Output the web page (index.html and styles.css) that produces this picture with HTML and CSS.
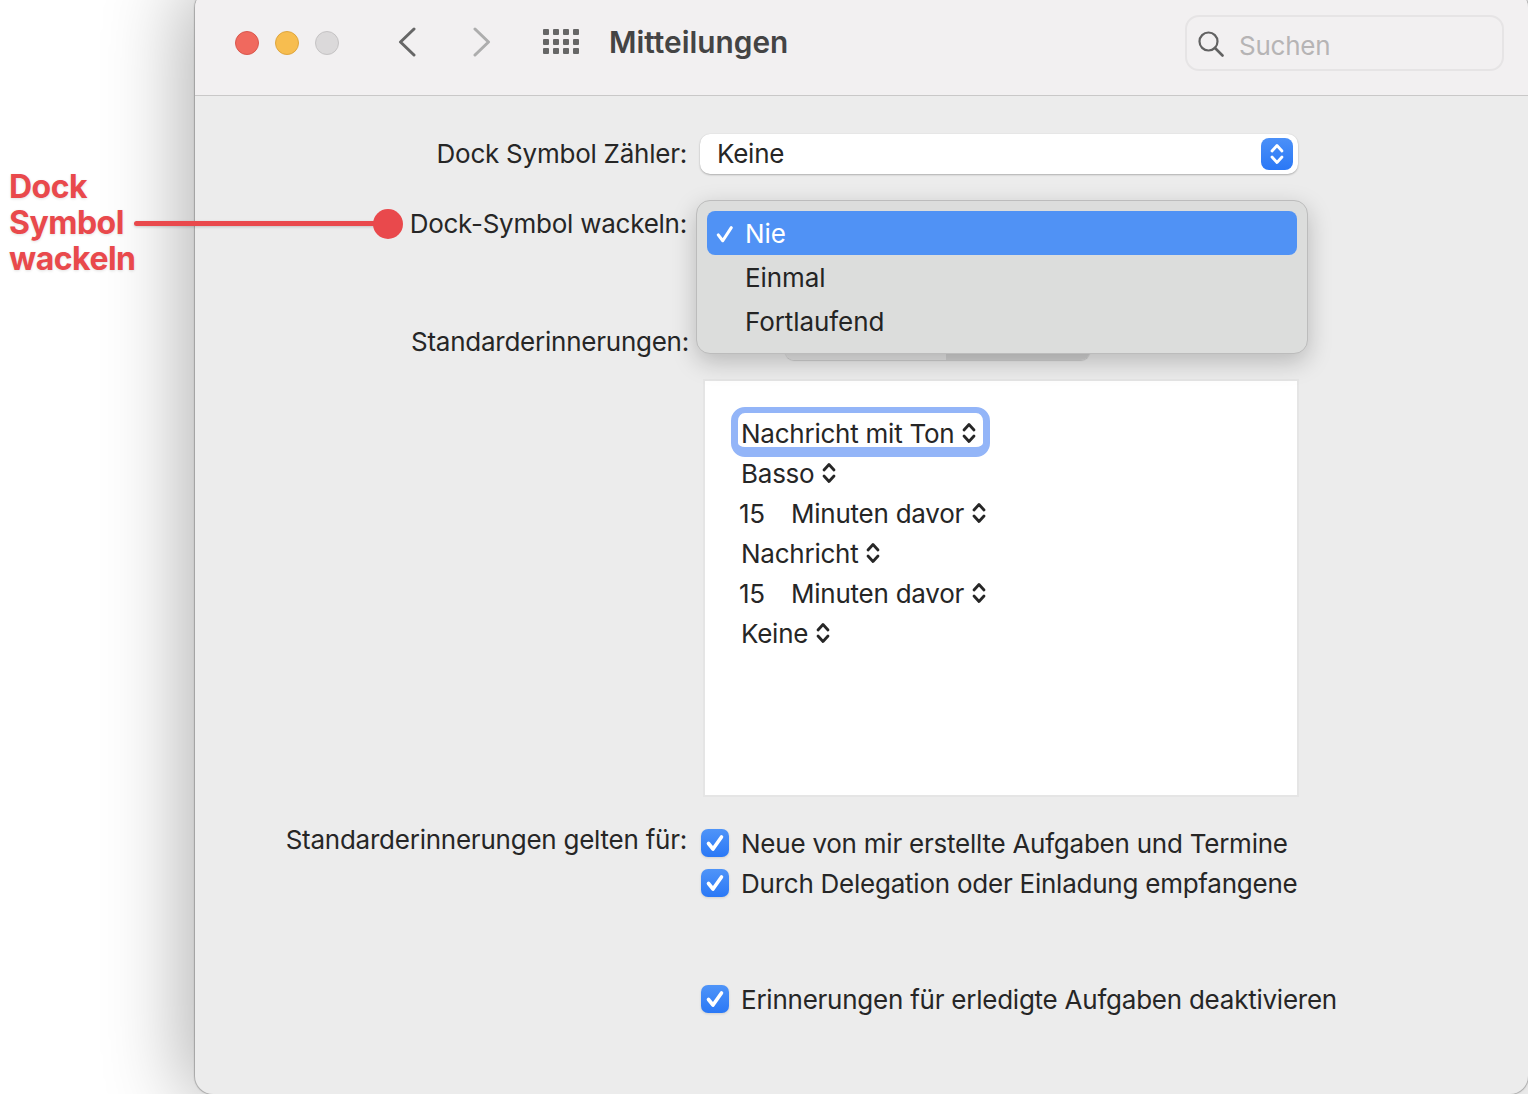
FILE: index.html
```html
<!DOCTYPE html>
<html lang="de">
<head>
<meta charset="utf-8">
<title>Mitteilungen</title>
<link rel="stylesheet" href="styles.css">
</head>
<body>
<svg class="defs" width="0" height="0" aria-hidden="true">
  <symbol id="updown" viewBox="0 0 14 26">
    <path d="M2 10 L7 4.500 L12 10 M2 16 L7 21.500 L12 16" fill="none" stroke="currentColor" stroke-width="2.800" stroke-linecap="round" stroke-linejoin="round"/>
  </symbol>
  <symbol id="tick" viewBox="0 0 28 28">
    <rect width="28" height="28" rx="7" fill="url(#checkfill)"/>
    <path d="M7.500 14.500 L12 20 L20.500 8" fill="none" stroke="#fff" stroke-width="3.600" stroke-linecap="round" stroke-linejoin="round"/>
  </symbol>
  <defs>
    <linearGradient id="checkfill" x1="0" y1="0" x2="0" y2="1">
      <stop offset="0" stop-color="#4f94f8"/>
      <stop offset="1" stop-color="#2a78f6"/>
    </linearGradient>
  </defs>
</svg>

<div class="window">
  <header class="titlebar">
    <div class="lights">
      <span class="light red"></span>
      <span class="light yellow"></span>
      <span class="light grey"></span>
    </div>
    <div class="nav">
      <svg class="chev" viewBox="0 0 18 30"><path d="M16 2 L2.500 15 L16 28" fill="none" stroke="#666" stroke-width="3" stroke-linecap="round" stroke-linejoin="round"/></svg>
      <svg class="chev" viewBox="0 0 18 30"><path d="M2 2 L15.500 15 L2 28" fill="none" stroke="#adadad" stroke-width="3" stroke-linecap="round" stroke-linejoin="round"/></svg>
    </div>
    <div class="gridicon">
      <i></i><i></i><i></i><i></i><i></i><i></i><i></i><i></i><i></i><i></i><i></i><i></i>
    </div>
    <h1 class="title">Mitteilungen</h1>
    <div class="search">
      <svg class="glass" viewBox="0 0 26 26"><circle cx="10.500" cy="10.500" r="9" fill="none" stroke="#626262" stroke-width="2.200"/><path d="M17 17 L24.500 24.500" stroke="#626262" stroke-width="2.600" stroke-linecap="round"/></svg>
      <span class="placeholder">Suchen</span>
    </div>
  </header>

  <main class="prefs">
    <div class="row first">
      <div class="label">Dock Symbol Zähler:</div>
      <div class="select">
        <span class="select-value">Keine</span>
        <span class="select-btn"><svg class="updown-btn"><use href="#updown"/></svg></span>
      </div>
    </div>

    <div class="row second">
      <div class="label">Dock-Symbol wackeln:</div>
    </div>

    <div class="row third">
      <div class="label nudge">Standarderinnerungen:</div>
      <div class="segments">
        <span class="seg"></span>
        <span class="seg active"></span>
      </div>
    </div>

    <div class="listbox">
      <div class="line"><span class="pick focus">Nachricht mit Ton <svg class="updown"><use href="#updown"/></svg></span></div>
      <div class="line"><span class="pick">Basso <svg class="updown"><use href="#updown"/></svg></span></div>
      <div class="line num"><span class="n">15</span><span class="pick">Minuten davor <svg class="updown"><use href="#updown"/></svg></span></div>
      <div class="line"><span class="pick">Nachricht <svg class="updown"><use href="#updown"/></svg></span></div>
      <div class="line num"><span class="n">15</span><span class="pick">Minuten davor <svg class="updown"><use href="#updown"/></svg></span></div>
      <div class="line"><span class="pick">Keine <svg class="updown"><use href="#updown"/></svg></span></div>
    </div>

    <div class="checks">
      <div class="row check-row">
        <div class="label raised">Standarderinnerungen gelten für:</div>
        <label class="check"><svg class="box"><use href="#tick"/></svg><span>Neue von mir erstellte Aufgaben und Termine</span></label>
      </div>
      <div class="row check-row">
        <div class="label"></div>
        <label class="check"><svg class="box"><use href="#tick"/></svg><span>Durch Delegation oder Einladung empfangene</span></label>
      </div>
      <div class="row check-row last">
        <div class="label"></div>
        <label class="check"><svg class="box"><use href="#tick"/></svg><span>Erinnerungen für erledigte Aufgaben deaktivieren</span></label>
      </div>
    </div>
  </main>

  <div class="menu">
    <div class="item on"><svg class="mark" viewBox="0 0 20 20"><path d="M2.500 11 L7.500 17.500 L17 3" fill="none" stroke="#fff" stroke-width="3.400" stroke-linecap="round" stroke-linejoin="round"/></svg>Nie</div>
    <div class="item">Einmal</div>
    <div class="item">Fortlaufend</div>
  </div>
</div>

<div class="callout">
  <div class="callout-text">Dock<br>Symbol<br>wackeln</div>
  <div class="callout-line"></div>
  <div class="callout-dot"></div>
</div>
</body>
</html>
```
FILE: styles.css
```css
* { box-sizing: border-box; }
html, body { margin: 0; padding: 0; height: 100%; background: #fff; overflow: hidden; }
body {
  font-family: Inter, "Liberation Sans", sans-serif;
  font-size: 26px;
  color: #262626;
  letter-spacing: -.24px;
}
.defs { position: absolute; }

.window {
  position: relative;
  margin: -10px 0 0 195px;
  width: 1333px;
  height: 1104px;
  background: #ececec;
  border-radius: 18px;
  box-shadow: 0 0 1px 1px rgba(120,120,120,.55), -6px 0 80px 6px rgba(0,0,0,.3);
}

.titlebar {
  display: flex;
  align-items: center;
  height: 106px;
  padding: 0 24px 0 40px;
  background: #f2f0f1;
  border-bottom: 1px solid #c9c8c8;
  border-radius: 18px 18px 0 0;
}
.lights { display: flex; gap: 16px; }
.light { width: 24px; height: 24px; border-radius: 50%; border: 1px solid; }
.red { background: #f0695e; border-color: #d9574d; }
.yellow { background: #f7bd4f; border-color: #dfa63e; }
.grey { background: #dbd9da; border-color: #c5c3c4; }

.nav { display: flex; gap: 57px; margin-left: 59px; margin-top: -2px; }
.chev { width: 18px; height: 30px; display: block; }

.gridicon {
  display: grid;
  grid-template-columns: repeat(4, 6px);
  grid-auto-rows: 6px;
  gap: 3.500px 4px;
  margin: -2px 0 0 52px;
}
.gridicon i { background: #666; border-radius: 1px; }

.title {
  margin: -2px 0 0 30px;
  font-size: 29.800px;
  font-weight: 600;
  color: #444;
  letter-spacing: 0;
}

.search {
  display: flex;
  align-items: center;
  width: 319px;
  height: 56px;
  margin: 0 0 0 auto;
  padding-left: 11px;
  border: 2px solid #e6e4e5;
  border-radius: 14px;
}
.glass { width: 26px; height: 26px; display: block; margin-top: 2px; flex: none; }
.placeholder { margin-left: 15px; padding-top: 6px; font-size: 26px; color: #b6b4b5; }

.prefs { padding-top: 38px; }
.row { display: flex; align-items: center; height: 40px; }
.second { margin-top: 30px; }
.third { margin-top: 78px; }
.label { width: 492px; flex: none; padding-bottom: 2px; text-align: right; white-space: nowrap; }
.nudge { width: 494px; }

.select {
  display: flex;
  align-items: center;
  justify-content: space-between;
  width: 598px;
  height: 40px;
  margin-left: 13px;
  padding: 0 5px 0 17px;
  background: #fff;
  border-radius: 10px;
  box-shadow: 0 1px 2px rgba(0,0,0,.25), 0 0 1px rgba(0,0,0,.12);
}
.select-value { padding-bottom: 2px; }
.select-btn {
  display: flex;
  align-items: center;
  justify-content: center;
  width: 32px;
  height: 32px;
  border-radius: 8px;
  background: linear-gradient(#4b90f8, #2a78f6);
  color: #fff;
}
.updown-btn { width: 14px; height: 26px; display: block; }

.segments {
  display: flex;
  margin-left: 96px;
  width: 305px;
  height: 38px;
  margin-top: -2px;
  border-radius: 9px;
  overflow: hidden;
  box-shadow: 0 1px 1px rgba(0,0,0,.15);
}
.seg { position: relative; flex: none; width: 161px; background: #e3e3e3; }
.seg::after {
  content: "";
  position: absolute;
  left: 66px;
  top: 30px;
  width: 7px;
  height: 2px;
  border-radius: 0 0 4px 4px;
  background: #555;
}
.seg.active { width: 144px; background: #d0d0d0; }
.seg.active::after { display: none; }

.listbox {
  width: 596px;
  height: 418px;
  margin: 17px 0 0 508px;
  padding: 32px 0 0 36px;
  background: #fff;
  border: 2px solid #e5e5e5;
}
.line { display: flex; align-items: center; height: 40px; }
.pick {
  display: inline-flex;
  align-items: center;
  gap: 8px;
  white-space: nowrap;
}
.updown { width: 14px; height: 26px; display: block; color: #262626; flex: none; }
.focus {
  height: 50px;
  margin: 0 0 2px -10px;
  padding: 6px 7px 0 3px;
  border: solid #93b5f8;
  border-width: 6px 7px 10px;
  border-radius: 14px;
  background: #fff;
}
.num { margin-left: -2px; }
.n { width: 52px; flex: none; }

.checks { margin-top: 26px; }
.check-row { align-items: center; }
.last { margin-top: 76px; }
.raised { margin-top: -6px; }
.check {
  display: flex;
  align-items: center;
  margin-left: 14px;
  white-space: nowrap;
}
.box { width: 28px; height: 28px; margin-right: 12px; display: block; flex: none; filter: drop-shadow(0 1px 1px rgba(0,0,0,.12)); }

.menu {
  position: absolute;
  left: 501px;
  top: 210px;
  width: 612px;
  height: 154px;
  padding: 10px 10px 0;
  background: #dcdddc;
  border: 1px solid #bcbcbc;
  border-radius: 14px;
  box-shadow: 0 8px 24px rgba(0,0,0,.22);
  color: #242424;
  letter-spacing: -.08px;
}
.item {
  display: flex;
  align-items: center;
  height: 44px;
  padding-left: 38px;
  border-radius: 8px;
}
.item.on { position: relative; background: #5092f5; color: #fff; }
.mark { position: absolute; left: 9px; top: 14px; width: 18px; height: 18px; }

.callout { position: absolute; left: 0; top: 0; color: #e9494c; }
.callout-text {
  position: absolute;
  left: 9px;
  top: 169px;
  font-size: 32px;
  font-weight: 700;
  line-height: 36px;
  letter-spacing: -.5px;
  white-space: nowrap;
  text-shadow: 0 1px 3px rgba(0,0,0,.12);
}
.callout-line {
  position: absolute;
  left: 134px;
  top: 221px;
  width: 250px;
  height: 5px;
  border-radius: 3px;
  background: #e9494c;
  box-shadow: 0 1px 3px rgba(0,0,0,.18);
}
.callout-dot {
  position: absolute;
  left: 373px;
  top: 209px;
  width: 30px;
  height: 30px;
  border-radius: 50%;
  background: #e9494c;
}
```
